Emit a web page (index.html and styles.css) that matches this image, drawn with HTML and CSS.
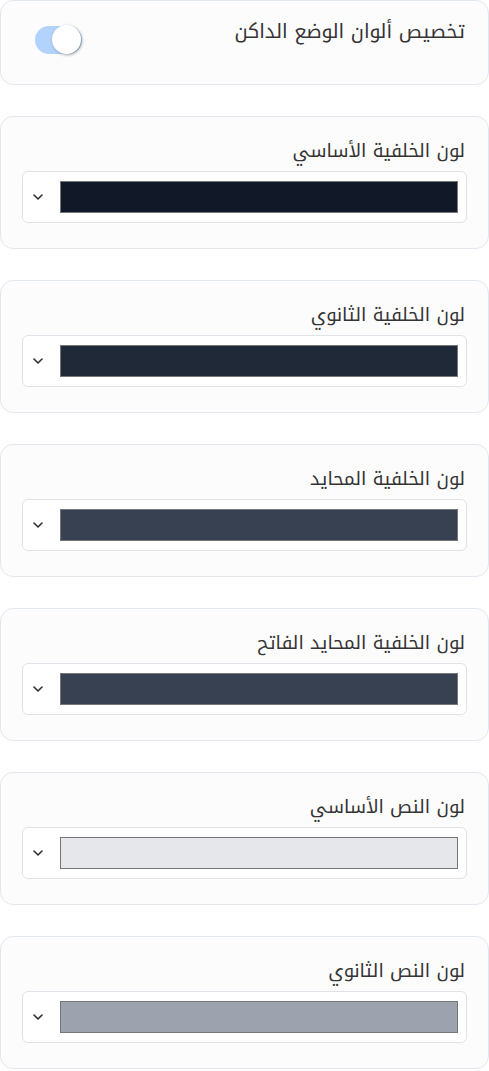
FILE: index.html
```html
<!DOCTYPE html>
<html lang="ar" dir="rtl">
<head><meta charset="utf-8"><title>ألوان الوضع الداكن</title><link rel="stylesheet" href="styles.css"></head>
<body>
<main class="settings">
  <section class="card card-toggle">
    <h2 class="title">تخصيص ألوان الوضع الداكن</h2>
    <div class="toggle" role="switch" aria-checked="true">
      <div class="track"><span class="knob"></span></div>
    </div>
  </section>

  <section class="card">
    <label class="label">لون الخلفية الأساسي</label>
    <div class="select">
      <span class="swatch sw-1"></span>
      <svg class="chev" viewBox="0 0 10 6" width="10" height="6"><path d="M1 1 L5 5 L9 1" /></svg>
    </div>
  </section>

  <section class="card">
    <label class="label">لون الخلفية الثانوي</label>
    <div class="select">
      <span class="swatch sw-2"></span>
      <svg class="chev" viewBox="0 0 10 6" width="10" height="6"><path d="M1 1 L5 5 L9 1" /></svg>
    </div>
  </section>

  <section class="card">
    <label class="label">لون الخلفية المحايد</label>
    <div class="select">
      <span class="swatch sw-3"></span>
      <svg class="chev" viewBox="0 0 10 6" width="10" height="6"><path d="M1 1 L5 5 L9 1" /></svg>
    </div>
  </section>

  <section class="card">
    <label class="label">لون الخلفية المحايد الفاتح</label>
    <div class="select">
      <span class="swatch sw-3"></span>
      <svg class="chev" viewBox="0 0 10 6" width="10" height="6"><path d="M1 1 L5 5 L9 1" /></svg>
    </div>
  </section>

  <section class="card">
    <label class="label">لون النص الأساسي</label>
    <div class="select">
      <span class="swatch sw-5"></span>
      <svg class="chev" viewBox="0 0 10 6" width="10" height="6"><path d="M1 1 L5 5 L9 1" /></svg>
    </div>
  </section>

  <section class="card">
    <label class="label">لون النص الثانوي</label>
    <div class="select">
      <span class="swatch sw-6"></span>
      <svg class="chev" viewBox="0 0 10 6" width="10" height="6"><path d="M1 1 L5 5 L9 1" /></svg>
    </div>
  </section>
</main>
</body>
</html>
```
FILE: styles.css
```css
html, body {
  margin: 0;
  padding: 0;
  background: #ffffff;
}
body {
  font-family: "Noto Kufi Arabic", "Noto Sans", "DejaVu Sans", sans-serif;
  color: #343434;
}
.settings {
  display: flex;
  flex-direction: column;
  gap: 31px;
  width: 489px;
}
.card {
  box-sizing: border-box;
  width: 100%;
  background: #fcfcfd;
  border: 1px solid #e2e7ee;
  border-radius: 13px;
  padding: 20px 21px 25px 21px;
  display: flex;
  flex-direction: column;
}
.card-toggle {
  flex-direction: row;
  justify-content: space-between;
  align-items: flex-start;
  height: 85px;
  padding: 17px 23px 0 23px;
}
.title {
  margin: 0;
  font-size: 19.5px;
  font-weight: 400;
  line-height: 28px;
  color: #343434;
}
.toggle {
  direction: ltr;
  margin-left: 11px;
  margin-top: 8px;
}
.track {
  width: 47px;
  height: 28px;
  border-radius: 14px;
  background: #b2d3fb;
  display: flex;
  align-items: center;
  justify-content: flex-end;
}
.knob {
  width: 29px;
  height: 29px;
  border-radius: 50%;
  background: #ffffff;
  box-shadow: 1px 1px 3px rgba(0, 0, 0, 0.35);
  transform: translate(-1px, -1px);
}
.label {
  display: block;
  font-size: 18.5px;
  line-height: 28px;
  margin-bottom: 6px;
  padding-right: 2px;
  color: #343434;
}
.select {
  box-sizing: border-box;
  height: 52px;
  background: #ffffff;
  border: 1px solid #dfe2e6;
  border-radius: 6px;
  display: flex;
  align-items: center;
  padding: 0 8px 0 10px;
  gap: 17px;
}
.swatch {
  flex: 1;
  height: 32px;
  box-sizing: border-box;
  border: 1px solid #767676;
}
.sw-1 { background: #111827; }
.sw-2 { background: #1f2937; }
.sw-3 { background: #374151; }
.sw-5 { background: #e5e7eb; }
.sw-6 { background: #9ca3af; }
.chev {
  flex: none;
  fill: none;
  stroke: #2d2d2d;
  stroke-width: 1.6;
  stroke-linecap: round;
  stroke-linejoin: round;
}
```
